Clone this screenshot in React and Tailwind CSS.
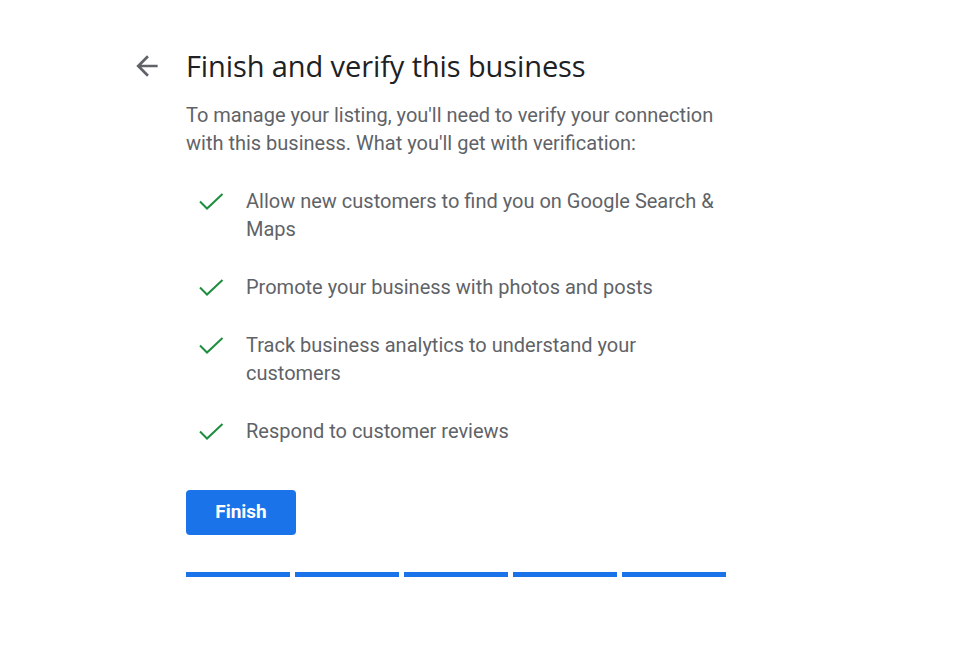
import React from 'react';

const items = [
    'Allow new customers to find you on Google Search & Maps',
    'Promote your business with photos and posts',
    'Track business analytics to understand your customers',
    'Respond to customer reviews',
];

function CheckIcon() {
    return (
        <svg width="25" height="17" viewBox="0 0 25 17" fill="none">
            <polyline points="1,8.5 8,15.5 23.5,1" stroke="#1e8e3e" strokeWidth="2" />
        </svg>
    );
}

export default function App() {
    return (
        <div className="min-h-screen bg-white font-['Roboto',sans-serif]">
            <div className="flex pl-[131px] pt-[47px]">
                {/* Back arrow */}
                <div className="w-[55px] pt-[3px]">
                    <svg width="32" height="32" viewBox="0 0 24 24" fill="#5f6368">
                        <path d="M20 11H7.83l5.59-5.59L12 4l-8 8 8 8 1.41-1.41L7.83 13H20v-2z" />
                    </svg>
                </div>

                <div className="w-[540px]">
                    <h1 className="text-[29px] leading-[38px] text-[#202124] font-['Open_Sans',sans-serif] tracking-[-0.1px]">
                        Finish and verify this business
                    </h1>
                    <p className="mt-[16px] text-[20px] leading-[28px] text-[#5f6368]">
                        To manage your listing, you'll need to verify your connection with this business. What you'll get with verification:
                    </p>

                    <ul className="mt-[30px] flex flex-col gap-[30px]">
                        {items.map((text) => (
                            <li key={text} className="flex">
                                <div className="w-[60px] shrink-0 pl-[13px] pt-[6px]">
                                    <CheckIcon />
                                </div>
                                <span className="text-[20px] leading-[28px] text-[#5f6368] pr-[4px]">{text}</span>
                            </li>
                        ))}
                    </ul>

                    <button className="mt-[45px] h-[45px] w-[110px] rounded-[4px] bg-[#1a73e8] text-white text-[19px] font-bold">
                        Finish
                    </button>

                    {/* Progress */}
                    <div className="mt-[37px] flex gap-[5px]">
                        <div className="h-[5px] flex-1 bg-[#1a73e8]" />
                        <div className="h-[5px] flex-1 bg-[#1a73e8]" />
                        <div className="h-[5px] flex-1 bg-[#1a73e8]" />
                        <div className="h-[5px] flex-1 bg-[#1a73e8]" />
                        <div className="h-[5px] flex-1 bg-[#1a73e8]" />
                    </div>
                </div>
            </div>
        </div>
    );
}
